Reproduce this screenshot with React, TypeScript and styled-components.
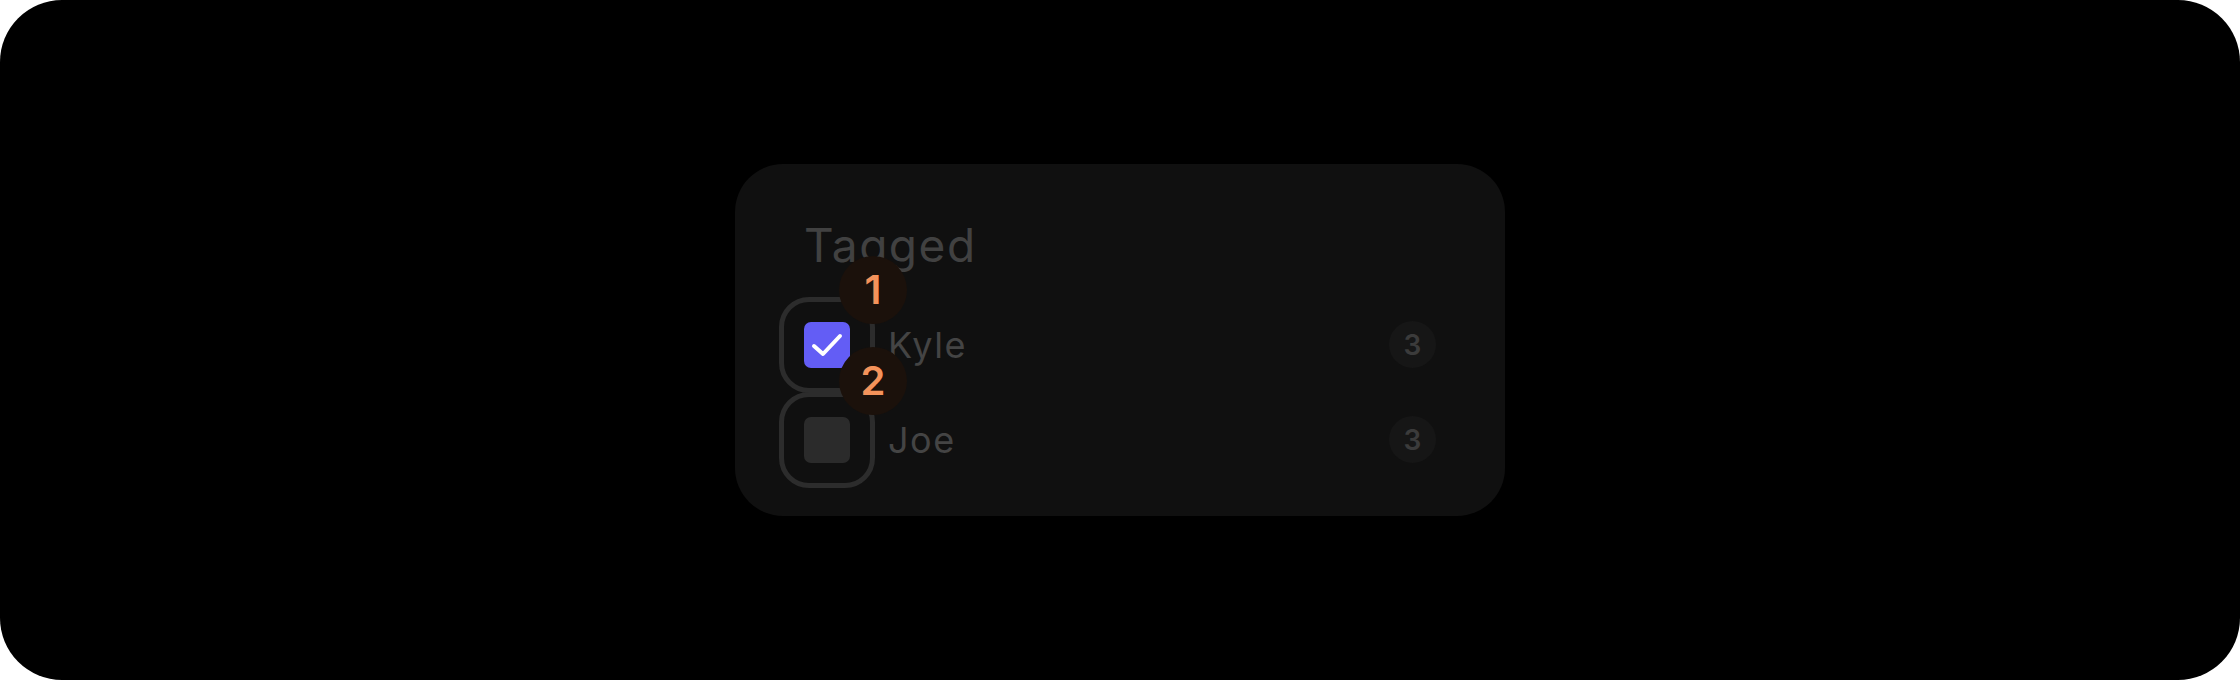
import styled, { createGlobalStyle } from 'styled-components';

const GlobalStyle = createGlobalStyle`
  html, body {
    margin: 0;
    padding: 0;
    background: #ffffff;
  }
  body {
    font-family: Inter, "Noto Sans", sans-serif;
  }
`;

const Page = styled.div`
  width: 2240px;
  height: 680px;
  background: #000000;
  border-radius: 62px;
  display: flex;
  align-items: center;
  justify-content: center;
`;

const Card = styled.div`
  box-sizing: border-box;
  width: 770px;
  height: 352px;
  background: #101010;
  border-radius: 48px;
  padding: 54px 69px 28px;
`;

const Heading = styled.h2`
  margin: 0;
  font-size: 46px;
  line-height: 54px;
  font-weight: 400;
  letter-spacing: 1.5px;
  color: #414141;
`;

const List = styled.div`
  margin-top: 25px;
  display: flex;
  flex-direction: column;
`;

const Row = styled.div`
  height: 95px;
  display: flex;
  align-items: center;
`;

const Box = styled.div<{ $checked: boolean }>`
  position: relative;
  flex: none;
  width: 46px;
  height: 46px;
  border-radius: 7px;
  background: ${p => (p.$checked ? '#635df5' : '#2b2b2b')};
  display: flex;
  align-items: center;
  justify-content: center;

  &::before {
    content: '';
    position: absolute;
    inset: -25px;
    border: 5px solid #2c2c2c;
    border-radius: 30px;
  }
`;

const Marker = styled.span<{ $top: number }>`
  position: absolute;
  z-index: 2;
  left: 35px;
  top: ${p => p.$top}px;
  width: 68px;
  height: 68px;
  border-radius: 50%;
  background: #1b110b;
  color: #f4935b;
  font-size: 40px;
  font-weight: 600;
  display: flex;
  align-items: center;
  justify-content: center;
`;

const Label = styled.span`
  flex: 1;
  margin-left: 38px;
  font-size: 36px;
  letter-spacing: 1.5px;
  color: #444444;
`;

const Count = styled.span`
  flex: none;
  width: 47px;
  height: 47px;
  border-radius: 50%;
  background: #161616;
  color: #3b3b3b;
  font-size: 28px;
  font-weight: 600;
  display: flex;
  align-items: center;
  justify-content: center;
`;

const CheckMark = () => (
  <svg width="46" height="46" viewBox="0 0 46 46">
    <polyline
      points="10,24 19,32 36,14"
      fill="none"
      stroke="#ffffff"
      strokeWidth="4"
      strokeLinecap="round"
      strokeLinejoin="round"
    />
  </svg>
);

const people = [
  { name: 'Kyle', count: 3, checked: true, marker: 1, markerTop: -66 },
  { name: 'Joe', count: 3, checked: false, marker: 2, markerTop: -70 },
];

const App = () => (
  <>
    <GlobalStyle />
    <Page>
      <Card>
        <Heading>Tagged</Heading>
        <List>
          {people.map(person => (
            <Row key={person.name}>
              <Box $checked={person.checked}>
                {person.checked && <CheckMark />}
                <Marker $top={person.markerTop}>{person.marker}</Marker>
              </Box>
              <Label>{person.name}</Label>
              <Count>{person.count}</Count>
            </Row>
          ))}
        </List>
      </Card>
    </Page>
  </>
);

export default App;
